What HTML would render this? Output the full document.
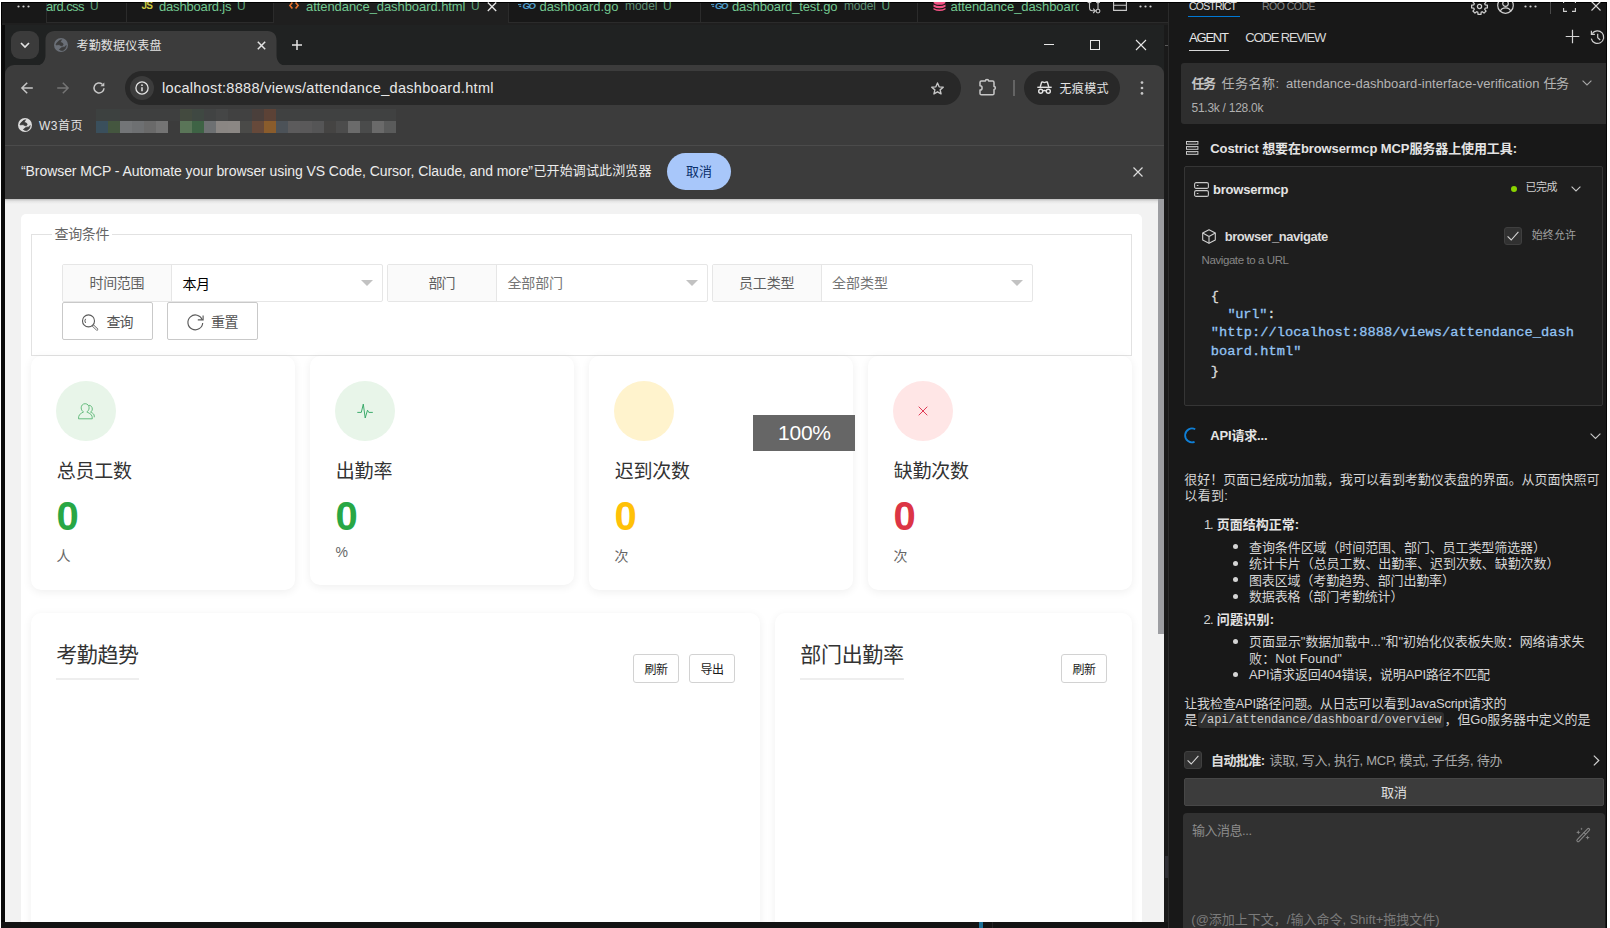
<!DOCTYPE html>
<html lang="zh-CN">
<head>
<meta charset="utf-8">
<title>考勤数据仪表盘</title>
<style>
*{box-sizing:border-box;margin:0;padding:0}
html,body{width:1610px;height:928px;overflow:hidden;background:#fff}
body{font-family:"Liberation Sans","Noto Sans CJK SC",sans-serif;color:#ccc;font-size:13px}
#root{position:absolute;left:0;top:0;width:1610px;height:928px;overflow:hidden;background:#fff}
#root div,#root span,#root svg,#root i{position:absolute;white-space:nowrap;display:block}
#root svg{overflow:visible}
.ln{background:#2b2b2b}
.card{background:#fff;border-radius:10px;box-shadow:0 2px 10px rgba(0,0,0,.065)}
.circ{width:60px;height:60px;border-radius:50%}
.ig{height:38px;border:1px solid #e6e6e6;border-radius:2px;background:#fff}
.igl{left:0;top:0;height:36px;width:109px;background:#fafafa;border-right:1px solid #e6e6e6}
.btn{height:38px;border:1px solid #c9c9c9;border-radius:2px;background:#fff}
.sbtn{height:29px;width:46px;border:1px solid #d2d2d2;border-radius:3px;background:#fff}
.cb{width:18px;height:18px;background:#313131;border:1px solid #3f3f3f;border-radius:3px}
</style>
</head>
<body>
<div id="root">
<div style="left:1px;top:2px;width:1606px;height:926px;background:#000"></div>
<div style="left:2px;top:3px;width:1166px;height:925px;background:#181818"></div>
<div id="vsc" style="left:2px;top:3px;width:1166px;height:22px;background:#181818;overflow:hidden">
<div style="left:271px;top:0;width:235px;height:22px;background:#1f1f1f"></div><div class="ln" style="left:44px;top:19px;width:228px;height:1px"></div><div class="ln" style="left:506px;top:19px;width:660px;height:1px"></div><div style="left:0;top:20px;width:1166px;height:2px;background:#1f1f1f"></div><div class="ln" style="left:44px;top:0;width:1px;height:20px"></div><div class="ln" style="left:124px;top:0;width:1px;height:20px"></div><div class="ln" style="left:271px;top:0;width:1px;height:20px"></div><div class="ln" style="left:506px;top:0;width:1px;height:20px"></div><div class="ln" style="left:698px;top:0;width:1px;height:20px"></div><div class="ln" style="left:915px;top:0;width:1px;height:20px"></div></div>
<svg style="left:17px;top:5px" width="13" height="3" viewBox="0 0 13 3"><circle cx="1.5" cy="1.5" r="1.1" fill="#d0d0d0"/><circle cx="6.5" cy="1.5" r="1.1" fill="#d0d0d0"/><circle cx="11.5" cy="1.5" r="1.1" fill="#d0d0d0"/></svg><span style="left:46.0px;top:-2.4px;line-height:18px;height:18px;font-size:13px;color:#73c991;letter-spacing:-0.568px;">ard.css</span><span style="left:90.0px;top:-1.9px;line-height:17px;height:17px;font-size:12px;color:#5fa57a;">U</span><span style="left:141.5px;top:-1.1px;line-height:14px;height:14px;font-size:10px;color:#cbcb41;font-weight:700;letter-spacing:-0.734px;">JS</span><span style="left:159.0px;top:-2.4px;line-height:18px;height:18px;font-size:13px;color:#73c991;letter-spacing:-0.178px;">dashboard.js</span><span style="left:237.0px;top:-1.9px;line-height:17px;height:17px;font-size:12px;color:#5fa57a;">U</span><svg style="left:289px;top:2px" width="10" height="7" viewBox="0 0 10 7"><path d="M3.4 0.6 L0.9 3.5 L3.4 6.4 M6.6 0.6 L9.1 3.5 L6.6 6.4" fill="none" stroke="#e8722c" stroke-width="1.6"/></svg><span style="left:306.0px;top:-2.4px;line-height:18px;height:18px;font-size:13px;color:#73c991;letter-spacing:-0.070px;">attendance_dashboard.html</span><span style="left:471.0px;top:-1.9px;line-height:17px;height:17px;font-size:12px;color:#5fa57a;">U</span><svg style="left:487px;top:2.700px" width="10" height="9" viewBox="0 0 10 9"><path d="M0.8 -0.5 L9.2 8 M9.2 -0.5 L0.8 8" stroke="#e8e8e8" stroke-width="1.3" fill="none"/></svg><svg style="left:518px;top:2.5px" width="18" height="8" viewBox="0 0 18 8"><path d="M0 1.6h3.2M1.2 3.4h2" stroke="#4fa0cf" stroke-width="1"/></svg><span style="left:522.5px;top:-1.1px;line-height:13px;height:13px;font-size:9.5px;color:#4fa0cf;font-weight:700;letter-spacing:-1.481px;font-style:italic;">GO</span><span style="left:539.5px;top:-2.4px;line-height:18px;height:18px;font-size:13px;color:#73c991;letter-spacing:-0.047px;">dashboard.go</span><span style="left:625.0px;top:-1.6px;line-height:17px;height:17px;font-size:12px;color:#5e8f72;letter-spacing:-0.047px;">model</span><span style="left:663.0px;top:-1.9px;line-height:17px;height:17px;font-size:12px;color:#5fa57a;">U</span><svg style="left:710.5px;top:2.5px" width="18" height="8" viewBox="0 0 18 8"><path d="M0 1.6h3.2M1.2 3.4h2" stroke="#4fa0cf" stroke-width="1"/></svg><span style="left:715.0px;top:-1.1px;line-height:13px;height:13px;font-size:9.5px;color:#4fa0cf;font-weight:700;letter-spacing:-1.481px;font-style:italic;">GO</span><span style="left:732.0px;top:-2.4px;line-height:18px;height:18px;font-size:13px;color:#73c991;letter-spacing:-0.138px;">dashboard_test.go</span><span style="left:844.0px;top:-1.6px;line-height:17px;height:17px;font-size:12px;color:#5e8f72;letter-spacing:-0.172px;">model</span><span style="left:881.5px;top:-1.9px;line-height:17px;height:17px;font-size:12px;color:#5fa57a;">U</span><svg style="left:932.5px;top:1px" width="13" height="11" viewBox="0 0 13 11"><g fill="#f55385"><ellipse cx="6.500" cy="1.600" rx="6" ry="2.200"/><path d="M0.500 3.600 Q6.500 6.600 12.500 3.600 V5.800 Q6.500 8.800 0.500 5.800 Z"/><path d="M0.500 7 Q6.500 10 12.500 7 V8.600 Q6.500 11.600 0.500 8.600 Z"/></g></svg><div style="left:950.5px;top:-6px;width:128px;height:28px;overflow:hidden"><span style="left:0.0px;top:3.6px;line-height:18px;height:18px;font-size:13px;color:#73c991;letter-spacing:-0.070px;">attendance_dashboard.html</span></div><svg style="left:1086.5px;top:2px" width="14" height="13" viewBox="0 0 14 13"><g fill="none" stroke="#c8c8c8" stroke-width="1.1"><path d="M2.5 -1 V5.5 Q2.5 8.8 5.5 8.8 H8"/><path d="M6.2 6.6 L8.4 8.8 L6.2 11"/><path d="M11 -1 V7"/><circle cx="11" cy="9.100" r="1.900"/><path d="M4.400 -1 A1.900 1.900 0 0 1 0.600 -1 M12.900 -1 A1.900 1.900 0 0 1 9.100 -1"/></g></svg><svg style="left:1112.5px;top:2px" width="14" height="10" viewBox="0 0 14 10"><g fill="none" stroke="#c8c8c8" stroke-width="1.1"><path d="M0.6 -2h12.8v10.4H0.6zM0.6 3.2h12.8"/></g></svg><svg style="left:1138.5px;top:5px" width="13" height="3" viewBox="0 0 13 3"><circle cx="1.5" cy="1.5" r="1.1" fill="#d0d0d0"/><circle cx="6.5" cy="1.5" r="1.1" fill="#d0d0d0"/><circle cx="11.5" cy="1.5" r="1.1" fill="#d0d0d0"/></svg><div id="win" style="left:5px;top:25px;width:1159px;height:897px;background:#202222"></div>
<div style="left:11px;top:31px;width:28px;height:28px;border-radius:9px;background:#3b3b3b"></div><svg style="left:20px;top:42px" width="10" height="6" viewBox="0 0 10 6"><path d="M1 1 L5 5 L9 1" fill="none" stroke="#e3e3e3" stroke-width="1.7"/></svg><div style="left:5px;top:65px;width:1159px;height:134px;background:#3c3c3c;border-radius:9px 9px 0 0"></div><svg style="left:35px;top:31px" width="252" height="35" viewBox="0 0 252 35"><path d="M0 35 C6 35 10.5 31 10.5 24 V9 C10.5 3.5 14 0 19.500 0 H232.5 C238 0 241.500 3.5 241.500 9 V24 C241.500 31 246 35 252 35 Z" fill="#3c3c3c"/></svg><svg style="left:54px;top:38px" width="14" height="14" viewBox="0 0 14 14"><circle cx="7" cy="7" r="7" fill="#6a6f77"/><path d="M7.6 1.8 C5.5 2.2 3 4 2 6.8 L5 6.600 C6 6.600 6.400 7.600 7.200 7.700 C8.400 7.800 9.200 7.200 9 6 C8.900 5 7.600 5 6.600 4.300 C6.400 3.200 7 2.400 7.600 1.800 Z M12.100 7.600 C11.600 8.600 11 9.200 10 9.200 L8.600 9.200 C7.800 9.300 7.400 10 6.600 10.400 C5.800 10.800 5.400 11.200 5.600 11.600 C6.400 12.400 8 12.600 9.200 12.200 C10.600 11.600 11.800 10.400 12.100 7.600 Z" fill="#3c3c3c" stroke="#3c3c3c" stroke-width="0.900" stroke-linejoin="round"/></svg><span style="left:76.5px;top:37.5px;line-height:17px;height:17px;font-size:12px;color:#e3e3e3;letter-spacing:0.164px;">考勤数据仪表盘</span><svg style="left:256.500px;top:40.500px" width="9" height="9" viewBox="0 0 9 9"><path d="M0.800 0.800 L8.200 8.200 M8.200 0.800 L0.800 8.200" stroke="#e3e3e3" stroke-width="1.5" fill="none"/></svg><svg style="left:292px;top:40px" width="10" height="10" viewBox="0 0 10 10"><path d="M5 0 V10 M0 5 H10" stroke="#e3e3e3" stroke-width="1.5" fill="none"/></svg><div style="left:1044px;top:44px;width:10px;height:1px;background:#e8e8e8"></div><div style="left:1090px;top:40px;width:10px;height:10px;border:1px solid #e8e8e8"></div><svg style="left:1136px;top:40px" width="10" height="10" viewBox="0 0 10 10"><path d="M0 0 L10 10 M10 0 L0 10" stroke="#e8e8e8" stroke-width="1.1" fill="none"/></svg><svg style="left:21px;top:82px" width="12" height="12" viewBox="0 0 12 12"><path d="M11.800 6 H1 M6.200 0.700 L0.900 6 L6.200 11.300" fill="none" stroke="#c7c7c7" stroke-width="1.5"/></svg><svg style="left:57px;top:82px" width="12" height="12" viewBox="0 0 12 12"><path d="M0.200 6 H11 M5.800 0.700 L11.100 6 L5.800 11.300" fill="none" stroke="#747474" stroke-width="1.5"/></svg><svg style="left:93px;top:82px" width="12" height="12" viewBox="0 0 12 12"><path d="M11 6.200 A5 5 0 1 1 9.300 2.200" fill="none" stroke="#c7c7c7" stroke-width="1.5"/><path d="M11.300 0.400 V4.300 H7.400 Z" fill="#c7c7c7"/></svg><div style="left:125px;top:71px;width:836px;height:34px;border-radius:17px;background:#282828"></div><div style="left:130px;top:76px;width:24px;height:24px;border-radius:12px;background:#3c3c3c"></div><svg style="left:135px;top:81px" width="14" height="14" viewBox="0 0 14 14"><circle cx="7" cy="7" r="6.1" fill="none" stroke="#e3e3e3" stroke-width="1.3"/><path d="M7 6.200 V10.200" stroke="#e3e3e3" stroke-width="1.5"/><circle cx="7" cy="4.200" r="0.900" fill="#e3e3e3"/></svg><span style="left:162.0px;top:78.3px;line-height:20px;height:20px;font-size:14.5px;color:#e8e8e8;letter-spacing:0.309px;">localhost:8888/views/attendance_dashboard.html</span><svg style="left:929.500px;top:80.500px" width="15" height="15" viewBox="0 0 24 24"><path d="M12 3.200 L14.600 9.300 L21.200 9.900 L16.200 14.200 L17.700 20.700 L12 17.300 L6.300 20.700 L7.800 14.200 L2.800 9.900 L9.400 9.300 Z" fill="none" stroke="#c7c7c7" stroke-width="2.2" stroke-linejoin="round"/></svg><svg style="left:979px;top:78px" width="18" height="18" viewBox="0 0 18 18"><path d="M2.400 3 H6.400 A1.600 1.600 0 0 1 9.600 3 H13.600 Q15 3 15 4.400 V8.600 A1.400 1.400 0 0 1 15 11.400 V15.400 Q15 16.800 13.600 16.800 H2.400 Q1 16.800 1 15.400 V12 A2.100 2.100 0 0 0 1 7.800 V4.400 Q1 3 2.400 3 Z" fill="none" stroke="#c7c7c7" stroke-width="1.500" stroke-linejoin="round"/></svg><div style="left:1013px;top:80px;width:2px;height:16px;background:#646464"></div><div style="left:1024px;top:71px;width:96px;height:34px;border-radius:17px;background:#282828"></div><svg style="left:1036.500px;top:81px" width="15" height="13" viewBox="0 0 15 13"><g fill="none" stroke="#e3e3e3" stroke-width="1.4"><path d="M0.300 6.300 H14.700"/><path d="M3.200 6 L4.600 1.300 Q4.800 0.700 5.400 0.900 L7.500 1.600 L9.600 0.900 Q10.200 0.700 10.400 1.300 L11.800 6"/><circle cx="3.700" cy="10.300" r="2"/><circle cx="11.300" cy="10.300" r="2"/><path d="M5.700 10 Q7.500 8.900 9.300 10"/></g></svg><span style="left:1059.5px;top:80.6px;line-height:17px;height:17px;font-size:12px;color:#e3e3e3;letter-spacing:0.328px;">无痕模式</span><svg style="left:1140px;top:81px" width="4" height="14" viewBox="0 0 4 14"><circle cx="2" cy="1.600" r="1.350" fill="#c7c7c7"/><circle cx="2" cy="7" r="1.350" fill="#c7c7c7"/><circle cx="2" cy="12.400" r="1.350" fill="#c7c7c7"/></svg><svg style="left:18px;top:118px" width="14" height="14" viewBox="0 0 14 14"><circle cx="7" cy="7" r="7" fill="#dcdcdc"/><path d="M7.6 1.8 C5.5 2.2 3 4 2 6.8 L5 6.600 C6 6.600 6.400 7.600 7.200 7.700 C8.400 7.800 9.200 7.200 9 6 C8.900 5 7.600 5 6.600 4.300 C6.400 3.200 7 2.400 7.600 1.800 Z M12.100 7.600 C11.600 8.600 11 9.200 10 9.200 L8.600 9.200 C7.800 9.300 7.400 10 6.600 10.400 C5.800 10.800 5.400 11.200 5.600 11.600 C6.400 12.400 8 12.600 9.200 12.200 C10.600 11.600 11.800 10.400 12.100 7.600 Z" fill="#3c3c3c" stroke="#3c3c3c" stroke-width="0.900" stroke-linejoin="round"/></svg><span style="left:39.0px;top:117.5px;line-height:17px;height:17px;font-size:12px;color:#e3e3e3;letter-spacing:0.495px;">W3首页</span><div style="left:96px;top:121px;width:12px;height:12px;background:#3a4f5c"></div><div style="left:108px;top:121px;width:12px;height:12px;background:#44563f"></div><div style="left:120px;top:121px;width:12px;height:12px;background:#737577"></div><div style="left:132px;top:121px;width:12px;height:12px;background:#6e7072"></div><div style="left:144px;top:121px;width:12px;height:12px;background:#6a6a6a"></div><div style="left:156px;top:121px;width:12px;height:12px;background:#747474"></div><div style="left:96px;top:109px;width:24px;height:12px;background:#3d4140"></div><div style="left:120px;top:109px;width:60px;height:12px;background:#3e3f3f"></div><div style="left:180px;top:121px;width:12px;height:12px;background:#5a7558"></div><div style="left:192px;top:121px;width:12px;height:12px;background:#3e6345"></div><div style="left:204px;top:121px;width:12px;height:12px;background:#6d7072"></div><div style="left:216px;top:121px;width:12px;height:12px;background:#8a8683"></div><div style="left:228px;top:121px;width:12px;height:12px;background:#8b8784"></div><div style="left:240px;top:121px;width:12px;height:12px;background:#4a4a48"></div><div style="left:252px;top:121px;width:12px;height:12px;background:#66493a"></div><div style="left:264px;top:121px;width:12px;height:12px;background:#8a5c2c"></div><div style="left:276px;top:121px;width:12px;height:12px;background:#4c5258"></div><div style="left:288px;top:121px;width:12px;height:12px;background:#5c5b5c"></div><div style="left:300px;top:121px;width:12px;height:12px;background:#5a595a"></div><div style="left:312px;top:121px;width:12px;height:12px;background:#555556"></div><div style="left:324px;top:121px;width:12px;height:12px;background:#454443"></div><div style="left:336px;top:121px;width:12px;height:12px;background:#4c4c4c"></div><div style="left:348px;top:121px;width:12px;height:12px;background:#6b6b6b"></div><div style="left:360px;top:121px;width:12px;height:12px;background:#4a4b4b"></div><div style="left:372px;top:121px;width:12px;height:12px;background:#6a6a6a"></div><div style="left:384px;top:121px;width:12px;height:12px;background:#5a5b5b"></div><div style="left:180px;top:109px;width:12px;height:12px;background:#434a3f"></div><div style="left:192px;top:109px;width:12px;height:12px;background:#3f4842"></div><div style="left:204px;top:109px;width:12px;height:12px;background:#414343"></div><div style="left:216px;top:109px;width:12px;height:12px;background:#454646"></div><div style="left:228px;top:109px;width:24px;height:12px;background:#414141"></div><div style="left:252px;top:109px;width:12px;height:12px;background:#4a3f3b"></div><div style="left:264px;top:109px;width:12px;height:12px;background:#5c4236"></div><div style="left:276px;top:109px;width:120px;height:12px;background:#404141"></div><div style="left:5px;top:145px;width:1159px;height:1px;background:#4b4b4b"></div><span style="left:21.0px;top:161.1px;line-height:20px;height:20px;font-size:14px;color:#ececec;letter-spacing:-0.068px;">“Browser MCP - Automate your browser using VS Code, Cursor, Claude, and more”</span><span style="left:533.5px;top:162.3px;line-height:18px;height:18px;font-size:13px;color:#ececec;letter-spacing:0.123px;">已开始调试此浏览器</span><div style="left:667px;top:153px;width:64px;height:37px;border-radius:18.500px;background:#a8c7fa"></div><span style="left:686.0px;top:163.0px;line-height:18px;height:18px;font-size:13px;color:#0a2f6b;letter-spacing:-0.016px;">取消</span><svg style="left:1133px;top:167px" width="10" height="10" viewBox="0 0 10 10"><path d="M0.500 0.500 L9.500 9.500 M9.500 0.500 L0.500 9.500" stroke="#dcdcdc" stroke-width="1.2" fill="none"/></svg><div id="page" style="left:5px;top:199px;width:1159px;height:723px;background:#f2f2f2;overflow:hidden">
<div style="left:0;top:0;width:1159px;height:5px;background:linear-gradient(#bdbdbd,#e4e4e4 45%,#f2f2f2)"></div><div style="left:16px;top:15px;width:1121px;height:720px;background:#fff;border-radius:5px"></div><div style="left:1153px;top:0;width:6px;height:435px;background:#9d9ea2"></div></div>
<div style="left:31px;top:234px;width:1101px;height:122px;border:1px solid #e2e2e2"></div><div style="left:52px;top:226px;width:60px;height:18px;background:#fff"></div><span style="left:54.5px;top:224.1px;line-height:20px;height:20px;font-size:14px;color:#666;letter-spacing:-0.333px;">查询条件</span><div class="ig" style="left:62px;top:264px;width:321px"><div class="igl"></div></div><span style="left:89.5px;top:273.4px;line-height:20px;height:20px;font-size:14px;color:#5f5f5f;letter-spacing:-0.333px;">时间范围</span><span style="left:182.5px;top:274.0px;line-height:20px;height:20px;font-size:14px;color:#000;letter-spacing:-0.500px;">本月</span><svg style="left:361px;top:280px" width="12" height="6" viewBox="0 0 12 6"><path d="M0 0 H12 L6 6 Z" fill="#c2c2c2"/></svg><div class="ig" style="left:387px;top:264px;width:321px"><div class="igl"></div></div><span style="left:428.5px;top:273.4px;line-height:20px;height:20px;font-size:14px;color:#5f5f5f;letter-spacing:-1.000px;">部门</span><span style="left:507.5px;top:273.3px;line-height:20px;height:20px;font-size:14px;color:#757575;letter-spacing:-0.167px;">全部部门</span><svg style="left:686px;top:280px" width="12" height="6" viewBox="0 0 12 6"><path d="M0 0 H12 L6 6 Z" fill="#c2c2c2"/></svg><div class="ig" style="left:712px;top:264px;width:321px"><div class="igl"></div></div><span style="left:739.0px;top:273.4px;line-height:20px;height:20px;font-size:14px;color:#5f5f5f;letter-spacing:-0.167px;">员工类型</span><span style="left:832.0px;top:273.3px;line-height:20px;height:20px;font-size:14px;color:#757575;">全部类型</span><svg style="left:1011px;top:280px" width="12" height="6" viewBox="0 0 12 6"><path d="M0 0 H12 L6 6 Z" fill="#c2c2c2"/></svg><div class="btn" style="left:62px;top:302px;width:91px"></div><svg style="left:82px;top:313.500px" width="17" height="17" viewBox="0 0 17 17"><g fill="none" stroke="#5a5a5a" stroke-width="1.100"><circle cx="6.500" cy="6.900" r="6"/><path d="M3.550 4.840 A3.600 3.600 0 0 0 3.550 8.960" stroke-width="1"/><path d="M11.300 11.900 L15 15.400" stroke="#666" stroke-width="2.500" stroke-linecap="round"/><path d="M11.500 12.100 L14.900 15.300" stroke="#fff" stroke-width="1.100" stroke-linecap="round"/></g></svg><span style="left:106.5px;top:311.9px;line-height:20px;height:20px;font-size:14px;color:#555;letter-spacing:-1.000px;">查询</span><div class="btn" style="left:167px;top:302px;width:91px"></div><svg style="left:186.500px;top:313.500px" width="17" height="17" viewBox="0 0 17 17"><g fill="none" stroke="#5a5a5a" stroke-width="1.150"><path d="M15.700 9 A7.400 7.400 0 1 1 15.300 5.900"/><path d="M16.100 1.600 V5.900 H10.800"/></g></svg><span style="left:211.0px;top:311.9px;line-height:20px;height:20px;font-size:14px;color:#555;letter-spacing:-0.500px;">重置</span><div class="card" style="left:31px;top:356px;width:264px;height:234px"></div><div class="circ" style="left:56px;top:381px;background:#e8f5e9"></div><span style="left:56.7px;top:457.8px;line-height:27px;height:27px;font-size:19px;color:#333;letter-spacing:-0.239px;">总员工数</span><span style="left:56.5px;top:487.6px;line-height:56px;height:56px;font-size:40px;color:#28a745;font-weight:700;">0</span><span style="left:56.6px;top:545.9px;line-height:20px;height:20px;font-size:14px;color:#666;">人</span><div class="card" style="left:310px;top:356px;width:264px;height:229px"></div><div class="circ" style="left:335px;top:381px;background:#e8f5e9"></div><span style="left:335.7px;top:457.8px;line-height:27px;height:27px;font-size:19px;color:#333;letter-spacing:-0.108px;">出勤率</span><span style="left:335.5px;top:487.6px;line-height:56px;height:56px;font-size:40px;color:#28a745;font-weight:700;">0</span><span style="left:335.6px;top:542.0px;line-height:20px;height:20px;font-size:14px;color:#666;">%</span><div class="card" style="left:589px;top:356px;width:264px;height:234px"></div><div class="circ" style="left:614px;top:381px;background:#fff3cd"></div><span style="left:614.7px;top:457.8px;line-height:27px;height:27px;font-size:19px;color:#333;letter-spacing:-0.239px;">迟到次数</span><span style="left:614.5px;top:487.6px;line-height:56px;height:56px;font-size:40px;color:#ffc107;font-weight:700;">0</span><span style="left:614.6px;top:545.9px;line-height:20px;height:20px;font-size:14px;color:#666;">次</span><div class="card" style="left:868px;top:356px;width:264px;height:234px"></div><div class="circ" style="left:893px;top:381px;background:#ffe6e6"></div><span style="left:893.7px;top:457.8px;line-height:27px;height:27px;font-size:19px;color:#333;letter-spacing:-0.239px;">缺勤次数</span><span style="left:893.5px;top:487.6px;line-height:56px;height:56px;font-size:40px;color:#dc3545;font-weight:700;">0</span><span style="left:893.6px;top:545.9px;line-height:20px;height:20px;font-size:14px;color:#666;">次</span><svg style="left:77.500px;top:402.500px" width="17" height="17" viewBox="0 0 17 17"><g fill="none" stroke="#5fb878" stroke-width="0.950"><path d="M7.150 0.700 C9.600 0.700 11.100 2.600 11.100 4.800 C11.100 6.800 10.100 8.200 8.800 8.900 C10.200 9.900 12.200 10.300 13.200 11.600 C14 12.700 14.300 14 14.300 15.800 H0.500 C0.500 14 0.800 12.700 1.600 11.600 C2.600 10.300 4.400 9.900 5.500 8.900 C4.200 8.200 3.200 6.800 3.200 4.800 C3.200 2.600 4.700 0.700 7.150 0.700 Z"/><path d="M11 2.300 C12.800 2.300 14.300 3.800 14.300 6 C14.300 7.600 13.500 8.600 12.600 9.100 C14 9.800 15.400 10.400 16 11.800 C16.300 12.600 16.300 13.400 16.200 14.300"/></g></svg><svg style="left:357px;top:403px" width="16" height="16" viewBox="0 0 16 16"><path d="M0.300 9.400 H4.300 L6.300 1.100 L8.200 15 L10.500 7.200 L11.800 9.400 H15.800" fill="none" stroke="#35a866" stroke-width="0.950" stroke-linejoin="round"/></svg><svg style="left:918px;top:406px" width="10" height="10" viewBox="0 0 10 10"><path d="M0.700 0.700 L9.300 9.300 M9.300 0.700 L0.700 9.300" stroke="#e03a55" stroke-width="1" fill="none"/></svg><div style="left:753px;top:415px;width:102px;height:36px;background:#666"></div><span style="left:778.0px;top:417.5px;line-height:29px;height:29px;font-size:21px;color:#fff;letter-spacing:-0.240px;">100%</span><div style="left:20px;top:600px;width:1137px;height:322px;overflow:hidden"><div class="card" style="left:11px;top:12.500px;width:729px;height:400px"></div><div class="card" style="left:755px;top:12.500px;width:357px;height:400px"></div></div><span style="left:56.3px;top:640.0px;line-height:29px;height:29px;font-size:21px;color:#333;letter-spacing:-0.433px;">考勤趋势</span><div style="left:56px;top:678px;width:83px;height:2px;background:#eee"></div><span style="left:800.3px;top:640.0px;line-height:29px;height:29px;font-size:21px;color:#333;letter-spacing:-0.325px;">部门出勤率</span><div style="left:800px;top:678px;width:104px;height:2px;background:#eee"></div><div class="sbtn" style="left:633px;top:654px"></div><span style="left:644.5px;top:661.5px;line-height:17px;height:17px;font-size:12px;color:#1a1a1a;letter-spacing:-0.516px;">刷新</span><div class="sbtn" style="left:689px;top:654px"></div><span style="left:700.5px;top:661.5px;line-height:17px;height:17px;font-size:12px;color:#1a1a1a;letter-spacing:-0.516px;">导出</span><div class="sbtn" style="left:1061px;top:654px"></div><span style="left:1072.5px;top:661.5px;line-height:17px;height:17px;font-size:12px;color:#1a1a1a;letter-spacing:-0.516px;">刷新</span><div id="panel" style="left:1168px;top:3px;width:439px;height:925px;background:#181818;border-left:1px solid #2b2b2b"></div>
<span style="left:1189.0px;top:-0.6px;line-height:15px;height:15px;font-size:10.5px;color:#e0e0e0;letter-spacing:-0.810px;">COSTRICT</span><div style="left:1188px;top:15.500px;width:52px;height:1px;background:#0078d4"></div><span style="left:1262.0px;top:-0.6px;line-height:15px;height:15px;font-size:10.5px;color:#868686;letter-spacing:-0.525px;">ROO CODE</span><svg style="left:1470.500px;top:-2.500px" width="17" height="17" viewBox="0 0 17 17"><g fill="none" stroke="#cfcfcf" stroke-width="1.250" stroke-linejoin="round"><path d="M6.78 2.86 L7.04 0.63 L9.96 0.63 L10.22 2.86 L11.27 3.29 L13.03 1.91 L15.09 3.97 L13.71 5.73 L14.14 6.78 L16.37 7.04 L16.37 9.96 L14.14 10.22 L13.71 11.27 L15.09 13.03 L13.03 15.09 L11.27 13.71 L10.22 14.14 L9.96 16.37 L7.04 16.37 L6.78 14.14 L5.73 13.71 L3.97 15.09 L1.91 13.03 L3.29 11.27 L2.86 10.22 L0.63 9.96 L0.63 7.04 L2.86 6.78 L3.29 5.73 L1.91 3.97 L3.97 1.91 L5.73 3.29 Z"/><circle cx="8.500" cy="8.500" r="2.100"/></g></svg><svg style="left:1496.700px;top:-2.900px" width="17" height="17" viewBox="0 0 17 17"><g fill="none" stroke="#cfcfcf" stroke-width="1.200"><circle cx="8.500" cy="8.500" r="7.800"/><circle cx="8.500" cy="6.600" r="2.800"/><path d="M3.300 14.300 C4.100 11.600 6.200 10.900 8.500 10.900 C10.800 10.900 12.900 11.600 13.700 14.300"/></g></svg><svg style="left:1524px;top:4.500px" width="13" height="3" viewBox="0 0 13 3"><circle cx="1.500" cy="1.500" r="1.100" fill="#d0d0d0"/><circle cx="6.500" cy="1.500" r="1.100" fill="#d0d0d0"/><circle cx="11.500" cy="1.500" r="1.100" fill="#d0d0d0"/></svg><div style="left:1550px;top:2px;width:1px;height:12px;background:#4a4a4a"></div><svg style="left:1563px;top:-1px" width="13" height="13" viewBox="0 0 13 13"><path d="M0.600 4 V0.600 H4 M9 0.600 H12.400 V4 M12.400 9 V12.400 H9 M4 12.400 H0.600 V9" fill="none" stroke="#d0d0d0" stroke-width="1.100"/></svg><svg style="left:1591px;top:1px" width="10" height="10" viewBox="0 0 10 10"><path d="M0.500 0.500 L9.500 9.500 M9.500 0.500 L0.500 9.500" stroke="#d8d8d8" stroke-width="1.100" fill="none"/></svg><span style="left:1189.0px;top:28.5px;line-height:18px;height:18px;font-size:13px;color:#e6e6e6;letter-spacing:-1.199px;">AGENT</span><div style="left:1188.500px;top:49.500px;width:40.500px;height:1px;background:#d8d8d8"></div><span style="left:1245.3px;top:28.7px;line-height:18px;height:18px;font-size:13px;color:#d8d8d8;letter-spacing:-1.157px;">CODE REVIEW</span><svg style="left:1565px;top:29px" width="15" height="15" viewBox="0 0 15 15"><path d="M7.500 0.700 V14.300 M0.700 7.500 H14.300" stroke="#d4d4d4" stroke-width="1.200" fill="none"/></svg><svg style="left:1589.500px;top:29.500px" width="15" height="15" viewBox="0 0 15 15"><g fill="none" stroke="#cfcfcf" stroke-width="1.200"><path d="M2.200 3.600 A6.300 6.300 0 1 1 1.300 8.600"/><path d="M1.400 0.800 V4.300 H4.900"/><path d="M7.700 3.800 V7.800 L10.200 10"/></g></svg><div style="left:1181px;top:63px;width:426px;height:61px;background:#2e2e2e;border-radius:3px 0 0 3px"></div><span style="left:1191.5px;top:75.0px;line-height:18px;height:18px;font-size:13px;color:#c4c4c4;font-weight:700;letter-spacing:-1.516px;">任务</span><span style="left:1221.5px;top:75.0px;line-height:18px;height:18px;font-size:13px;color:#b4b4b4;letter-spacing:0.469px;">任务名称:</span><span style="left:1286.0px;top:74.8px;line-height:18px;height:18px;font-size:13px;color:#b4b4b4;letter-spacing:0.065px;">attendance-dashboard-interface-verification</span><span style="left:1543.5px;top:75.0px;line-height:18px;height:18px;font-size:13px;color:#b4b4b4;letter-spacing:-0.516px;">任务</span><svg style="left:1582px;top:80px" width="10" height="6" viewBox="0 0 10 6"><path d="M0.600 0.600 L5 5 L9.400 0.600" fill="none" stroke="#a8a8a8" stroke-width="1.100"/></svg><span style="left:1191.5px;top:99.9px;line-height:17px;height:17px;font-size:12px;color:#b0b0b0;letter-spacing:-0.261px;">51.3k / 128.0k</span><svg style="left:1185.900px;top:141.200px" width="13" height="14" viewBox="0 0 13 14"><g fill="none" stroke="#cdcdcd" stroke-width="1"><rect x="0.500" y="0.500" width="11.400" height="2.700"/><rect x="0.500" y="5.600" width="11.400" height="2.700"/><rect x="0.500" y="10.600" width="11.400" height="2.700"/></g><path d="M2.500 1.300h7M2.500 6.400h7M2.500 11.400h7" stroke="#8a8a8a" stroke-width="0.900" stroke-dasharray="1 1"/></svg><span style="left:1210.3px;top:139.9px;line-height:18px;height:18px;font-size:13px;color:#e4e4e4;font-weight:700;letter-spacing:-0.093px;">Costrict 想要在browsermcp MCP服务器上使用工具:</span><div style="left:1184px;top:166px;width:419px;height:240px;background:#1e1e1e;border:1px solid #353535;border-radius:2px"></div><svg style="left:1193.500px;top:181.500px" width="15" height="15" viewBox="0 0 15 15"><g fill="none" stroke="#c8c8c8" stroke-width="1.100"><rect x="0.600" y="0.600" width="13.800" height="5.800" rx="1.500"/><rect x="0.600" y="8.600" width="13.800" height="5.800" rx="1.500"/><path d="M2.800 3.500 h1.600 M2.800 11.500 h1.600"/></g></svg><span style="left:1213.0px;top:180.5px;line-height:18px;height:18px;font-size:13px;color:#e4e4e4;font-weight:700;letter-spacing:-0.201px;">browsermcp</span><div style="left:1511px;top:186px;width:6px;height:6px;border-radius:3px;background:#8ad400"></div><span style="left:1525.5px;top:179.8px;line-height:15px;height:15px;font-size:11px;color:#d0d0d0;letter-spacing:-0.500px;">已完成</span><svg style="left:1571px;top:186px" width="10" height="6" viewBox="0 0 10 6"><path d="M0.600 0.600 L5 5 L9.400 0.600" fill="none" stroke="#c8c8c8" stroke-width="1.100"/></svg><svg style="left:1202px;top:228.500px" width="14" height="15" viewBox="0 0 14 15"><g fill="none" stroke="#d0d0d0" stroke-width="1.100" stroke-linejoin="round"><path d="M7 0.700 L13.300 4 V11 L7 14.300 L0.700 11 V4 Z"/><path d="M0.700 4 L7 7.400 L13.300 4 M7 7.400 V14.300"/></g></svg><span style="left:1224.8px;top:228.0px;line-height:18px;height:18px;font-size:13px;color:#dcdcdc;font-weight:700;letter-spacing:-0.470px;">browser_navigate</span><div class="cb" style="left:1504px;top:227px"></div><svg style="left:1507px;top:231px" width="12" height="10" viewBox="0 0 12 10"><path d="M0.600 5.400 L4.200 9 L11.400 0.800" fill="none" stroke="#d4d4d4" stroke-width="1.100"/></svg><span style="left:1531.7px;top:228.1px;line-height:15px;height:15px;font-size:11px;color:#a0a0a0;letter-spacing:0.100px;">始终允许</span><span style="left:1201.5px;top:252.1px;line-height:16px;height:16px;font-size:11.5px;color:#868686;letter-spacing:-0.404px;">Navigate to a URL</span><span style="left:1210.7px;top:286.9px;line-height:19px;height:19px;font-size:13.7px;color:#d8d8d8;font-family:'Liberation Mono','Noto Sans Mono CJK SC',monospace;-webkit-text-stroke:0.300px;">{</span><span style="left:1227.4px;top:304.7px;line-height:19px;height:19px;font-size:13.7px;color:#d8d8d8;font-family:'Liberation Mono','Noto Sans Mono CJK SC',monospace;letter-spacing:-0.239px;-webkit-text-stroke:0.300px;"><span style="position:static;display:inline;color:#94c4f3">"url"</span>:</span><span style="left:1210.7px;top:323.4px;line-height:19px;height:19px;font-size:13.7px;color:#94c4f3;font-family:'Liberation Mono','Noto Sans Mono CJK SC',monospace;letter-spacing:0.044px;-webkit-text-stroke:0.300px;">"http://localhost:8888/views/attendance_dash</span><span style="left:1210.7px;top:342.4px;line-height:19px;height:19px;font-size:13.7px;color:#94c4f3;font-family:'Liberation Mono','Noto Sans Mono CJK SC',monospace;letter-spacing:0.044px;-webkit-text-stroke:0.300px;">board.html"</span><span style="left:1210.7px;top:361.5px;line-height:19px;height:19px;font-size:13.7px;color:#d8d8d8;font-family:'Liberation Mono','Noto Sans Mono CJK SC',monospace;-webkit-text-stroke:0.300px;">}</span><svg style="left:1184px;top:427.500px" width="12" height="16" viewBox="0 0 12 16"><path d="M11.240 1.310 A6.900 6.900 0 1 0 10.580 13.800" fill="none" stroke="#0f7fd6" stroke-width="1.800"/></svg><span style="left:1210.3px;top:427.2px;line-height:18px;height:18px;font-size:13px;color:#e4e4e4;font-weight:700;letter-spacing:-0.188px;">API请求...</span><svg style="left:1589.500px;top:433px" width="11" height="7" viewBox="0 0 11 7"><path d="M0.600 0.600 L5.500 5.500 L10.400 0.600" fill="none" stroke="#c8c8c8" stroke-width="1.100"/></svg><span style="left:1184.3px;top:470.7px;line-height:18px;height:18px;font-size:13px;color:#d4d4d4;letter-spacing:-0.026px;">很好！页面已经成功加载，我可以看到考勤仪表盘的界面。从页面快照可</span><span style="left:1184.3px;top:486.9px;line-height:18px;height:18px;font-size:13px;color:#d4d4d4;letter-spacing:0.358px;">以看到:</span><span style="left:1204.0px;top:516.3px;line-height:18px;height:18px;font-size:13px;color:#d4d4d4;letter-spacing:-1.344px;">1.</span><span style="left:1216.7px;top:516.3px;line-height:18px;height:18px;font-size:13px;color:#e4e4e4;font-weight:700;letter-spacing:-0.007px;">页面结构正常:</span><div style="left:1233px;top:544.4px;width:5px;height:5px;border-radius:2.500px;background:#d4d4d4"></div><span style="left:1249.0px;top:538.6px;line-height:18px;height:18px;font-size:13px;color:#d4d4d4;letter-spacing:-0.092px;">查询条件区域（时间范围、部门、员工类型筛选器）</span><div style="left:1233px;top:560.7px;width:5px;height:5px;border-radius:2.500px;background:#d4d4d4"></div><span style="left:1249.0px;top:554.9px;line-height:18px;height:18px;font-size:13px;color:#d4d4d4;letter-spacing:-0.066px;">统计卡片（总员工数、出勤率、迟到次数、缺勤次数）</span><div style="left:1233px;top:577.4px;width:5px;height:5px;border-radius:2.500px;background:#d4d4d4"></div><span style="left:1249.0px;top:571.6px;line-height:18px;height:18px;font-size:13px;color:#d4d4d4;letter-spacing:-0.134px;">图表区域（考勤趋势、部门出勤率）</span><div style="left:1233px;top:593.7px;width:5px;height:5px;border-radius:2.500px;background:#d4d4d4"></div><span style="left:1249.0px;top:587.9px;line-height:18px;height:18px;font-size:13px;color:#d4d4d4;letter-spacing:-0.138px;">数据表格（部门考勤统计）</span><span style="left:1203.5px;top:611.4px;line-height:18px;height:18px;font-size:13px;color:#d4d4d4;letter-spacing:-0.844px;">2.</span><span style="left:1216.7px;top:611.4px;line-height:18px;height:18px;font-size:13px;color:#e4e4e4;font-weight:700;letter-spacing:0.239px;">问题识别:</span><div style="left:1233px;top:638.8px;width:5px;height:5px;border-radius:2.500px;background:#d4d4d4"></div><span style="left:1249.0px;top:633.0px;line-height:18px;height:18px;font-size:13px;color:#d4d4d4;letter-spacing:-0.041px;">页面显示"数据加载中..."和"初始化仪表板失败：网络请求失</span><span style="left:1249.0px;top:650.1px;line-height:18px;height:18px;font-size:13px;color:#d4d4d4;letter-spacing:0.152px;">败：Not Found"</span><div style="left:1233px;top:671.9px;width:5px;height:5px;border-radius:2.500px;background:#d4d4d4"></div><span style="left:1249.0px;top:666.1px;line-height:18px;height:18px;font-size:13px;color:#d4d4d4;letter-spacing:-0.210px;">API请求返回404错误，说明API路径不匹配</span><span style="left:1184.3px;top:694.7px;line-height:18px;height:18px;font-size:13px;color:#d4d4d4;letter-spacing:-0.208px;">让我检查API路径问题。从日志可以看到JavaScript请求的</span><span style="left:1184.3px;top:711.1px;line-height:18px;height:18px;font-size:13px;color:#d4d4d4;">是</span><div style="left:1197.500px;top:711.500px;width:246.500px;height:16px;background:#2f2f2f;border-radius:3px"></div><span style="left:1200.0px;top:711.8px;line-height:17px;height:17px;font-size:12px;color:#cfcfcf;font-family:'Liberation Mono','Noto Sans Mono CJK SC',monospace;letter-spacing:-0.101px;">/api/attendance/dashboard/overview</span><span style="left:1444.5px;top:711.1px;line-height:18px;height:18px;font-size:13px;color:#d4d4d4;letter-spacing:-0.122px;">，但Go服务器中定义的是</span><div style="left:1169px;top:738px;width:438px;height:190px;background:#181818"></div><div class="cb" style="left:1184px;top:751px"></div><svg style="left:1187px;top:755px" width="12" height="10" viewBox="0 0 12 10"><path d="M0.600 5.400 L4.200 9 L11.400 0.800" fill="none" stroke="#d4d4d4" stroke-width="1.100"/></svg><span style="left:1211.0px;top:751.9px;line-height:18px;height:18px;font-size:13px;color:#dcdcdc;font-weight:700;letter-spacing:-0.586px;">自动批准:</span><span style="left:1269.5px;top:751.9px;line-height:18px;height:18px;font-size:13px;color:#a8a8a8;letter-spacing:-0.243px;">读取, 写入, 执行, MCP, 模式, 子任务, 待办</span><svg style="left:1592.500px;top:755px" width="7" height="11" viewBox="0 0 7 11"><path d="M0.800 0.600 L5.800 5.500 L0.800 10.400" fill="none" stroke="#d0d0d0" stroke-width="1.200"/></svg><div style="left:1184px;top:777.500px;width:420px;height:28px;background:#3c3c3c;border:1px solid #474747;border-radius:2px"></div><span style="left:1381.0px;top:783.7px;line-height:18px;height:18px;font-size:13px;color:#e0e0e0;letter-spacing:-0.016px;">取消</span><div style="left:1183px;top:813px;width:421.500px;height:120px;background:#313131;border-radius:4px"></div><span style="left:1192.0px;top:821.7px;line-height:18px;height:18px;font-size:13px;color:#8c8c8c;letter-spacing:-0.474px;">输入消息...</span><svg style="left:1575px;top:826px" width="16" height="17" viewBox="0 0 16 17"><path d="M3.100 14.500 L13.400 3.600" stroke="#858585" stroke-width="3.500" stroke-linecap="round"/><path d="M3.100 14.500 L13.400 3.600" stroke="#313131" stroke-width="1.300" stroke-linecap="round"/><path d="M8.700 6.300 L10.900 8.400" stroke="#858585" stroke-width="1.100"/><path d="M3.300 4.100 L3.900 5.700 L5.500 6.300 L3.900 6.900 L3.300 8.500 L2.700 6.900 L1.100 6.300 L2.700 5.700 Z M12.600 9.400 L13.200 11 L14.800 11.600 L13.200 12.200 L12.600 13.800 L12 12.200 L10.400 11.600 L12 11 Z M6.500 1.600 L6.900 2.500 L7.800 2.900 L6.900 3.300 L6.500 4.200 L6.100 3.300 L5.200 2.900 L6.100 2.500 Z" fill="#858585"/></svg><span style="left:1191.3px;top:911.2px;line-height:18px;height:18px;font-size:13px;color:#7a7a7a;">(@添加上下文，/输入命令, Shift+拖拽文件)</span><div style="left:1164px;top:25px;width:4px;height:903px;background:#1a1a1a"></div><div style="left:1px;top:25px;width:4px;height:903px;background:#0a0a0a"></div><div style="left:1px;top:922px;width:1167px;height:6px;background:#131313"></div><div style="left:979px;top:922px;width:4px;height:6px;background:#1b6f96"></div><div style="left:992px;top:922px;width:1px;height:6px;background:#242424"></div><div style="left:1164.500px;top:856px;width:3.500px;height:22px;background:#303035"></div><div style="left:1164.500px;top:44.500px;width:3.500px;height:1px;background:#5a5a5a"></div><div style="left:0;top:0;width:1610px;height:2px;background:#fff"></div><div style="left:0;top:0;width:1px;height:928px;background:#fff"></div><div style="left:1607px;top:0;width:3px;height:928px;background:#fff"></div><div style="left:1605.500px;top:2px;width:1.500px;height:926px;background:#050505"></div></div>
</body>
</html>
